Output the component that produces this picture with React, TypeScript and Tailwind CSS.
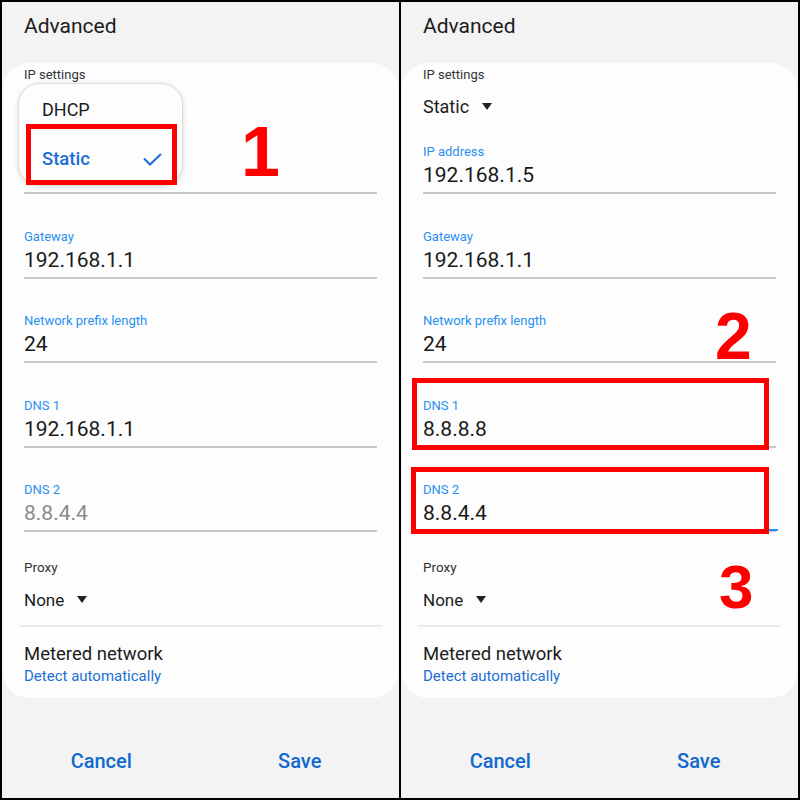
import React from 'react';

type Field = { label: string; value: string; hint?: boolean; focused?: boolean };

function Caret() {
  return (
    <svg width="10" height="8" viewBox="0 0 10 8" className="ml-[13px]">
      <path d="M0 0 L10 0 L5 7 Z" fill="#222" />
    </svg>
  );
}

function FieldRow({ f, first, covered }: { f: Field; first?: boolean; covered?: boolean }) {
  return (
    <div className={first ? 'mt-[25px]' : 'mt-[34.5px]'}>
      <div className={`text-[13px] leading-[16px] text-[#2990f2] ${covered ? 'invisible' : ''}`}>{f.label}</div>
      <div
        className={`mt-[2px] text-[21px] leading-[26px] ${f.hint ? 'text-[#8a8a8a]' : 'text-[#1a1a1a]'} ${covered ? 'invisible' : ''}`}
      >
        {f.value}
      </div>
      <div className="mt-[4px] h-[2px] bg-[#c8c8c8]" />
    </div>
  );
}

// covered: the dropdown popup lies over the first rows of the card
function Panel({ fields, covered, children }: { fields: Field[]; covered?: boolean; children?: React.ReactNode }) {
  return (
    <div className="relative flex w-[397px] flex-col bg-[#f3f3f3]">
      <div className="h-[61px] pl-[22px] pt-[12px] text-[21px] leading-[24px] text-[#1c1c1c]">Advanced</div>
      <div className="mx-px rounded-[26px] bg-[#fdfdfd] px-[21px] pt-[4px] pb-[11px]">
        <div className="text-[13px] leading-[16px] text-[#333]">IP settings</div>
        <div className={`mt-[12px] flex items-center text-[18px] leading-[24px] text-[#1c1c1c] ${covered ? 'invisible' : ''}`}>
          Static
          <Caret />
        </div>
        {fields.map((f, i) => (
          <FieldRow key={f.label} f={f} first={i === 0} covered={covered && i === 0} />
        ))}
        <div className="mt-[27px] text-[13.5px] leading-[16px] text-[#333]">Proxy</div>
        <div className="mt-[13px] flex items-center text-[17px] leading-[24px] text-[#1c1c1c]">
          None
          <Caret />
        </div>
        <div className="-mx-[5px] mt-[13px] h-[2px] bg-[#ebebeb]" />
        <div className="mt-[15px] text-[18.5px] leading-[24px] text-[#1c1c1c]">Metered network</div>
        <div className="text-[15px] leading-[21px] text-[#1c6fd4]">Detect automatically</div>
      </div>
      <div className="mt-[50px] flex text-[20px] font-medium leading-[26px] text-[#1268cf]">
        <div className="flex-1 text-center">Cancel</div>
        <div className="flex-1 text-center">Save</div>
      </div>
      {children}
    </div>
  );
}

export default function App() {
  const left: Field[] = [
    { label: 'IP address', value: '192.168.1.5' },
    { label: 'Gateway', value: '192.168.1.1' },
    { label: 'Network prefix length', value: '24' },
    { label: 'DNS 1', value: '192.168.1.1' },
    { label: 'DNS 2', value: '8.8.4.4', hint: true },
  ];
  const right: Field[] = [
    { label: 'IP address', value: '192.168.1.5' },
    { label: 'Gateway', value: '192.168.1.1' },
    { label: 'Network prefix length', value: '24' },
    { label: 'DNS 1', value: '8.8.8.8' },
    { label: 'DNS 2', value: '8.8.4.4', focused: true },
  ];
  const mark = 'absolute font-bold text-[#ff0000] leading-none';
  const markFont = { fontFamily: '"Liberation Sans", Arial, sans-serif' };

  return (
    <div
      className="flex h-[800px] w-[800px] gap-[2px] bg-black p-[2px]"
      style={{ fontFamily: 'Roboto, "Noto Sans", sans-serif' }}
    >
      <Panel fields={left} covered>
        {/* IP settings dropdown */}
        <div className="absolute left-[16px] top-[81px] h-[103px] w-[165px] rounded-[22px] border border-[#dedede] bg-[#fdfdfd] shadow-[0_1px_5px_rgba(0,0,0,0.15)]">
          <div className="pl-[23px] pt-[14px] text-[18px] leading-[24px] text-[#1c1c1c]">DHCP</div>
          <div className="mt-[25px] flex items-center pl-[23px] pr-[20px] text-[18.5px] font-medium leading-[24px] text-[#1a6ed6]">
            <span className="flex-1">Static</span>
            <svg width="19" height="13" viewBox="0 0 19 13">
              <path d="M1 5.5 L7 11.5 L18 1" fill="none" stroke="#1a6ed6" strokeWidth="2" />
            </svg>
          </div>
        </div>
        <div className="absolute left-[24px] top-[122px] h-[61px] w-[151px] border-[5px] border-[#ff0000]" />
        <div className={`${mark} left-[239px] top-[115px] text-[70px]`} style={markFont}>
          1
        </div>
      </Panel>
      <Panel fields={right}>
        <div className="absolute right-[20px] top-[527px] h-[2px] w-[10px] bg-[#2990f2]" />
        <div className="absolute left-[11px] top-[376px] h-[72px] w-[357px] border-[5px] border-[#ff0000]" />
        <div className="absolute left-[10px] top-[465px] h-[67px] w-[358px] border-[5px] border-[#ff0000]" />
        <div className={`${mark} left-[314px] top-[301px] text-[66px]`} style={markFont}>
          2
        </div>
        <div className={`${mark} left-[318px] top-[554px] text-[62px]`} style={markFont}>
          3
        </div>
      </Panel>
    </div>
  );
}
